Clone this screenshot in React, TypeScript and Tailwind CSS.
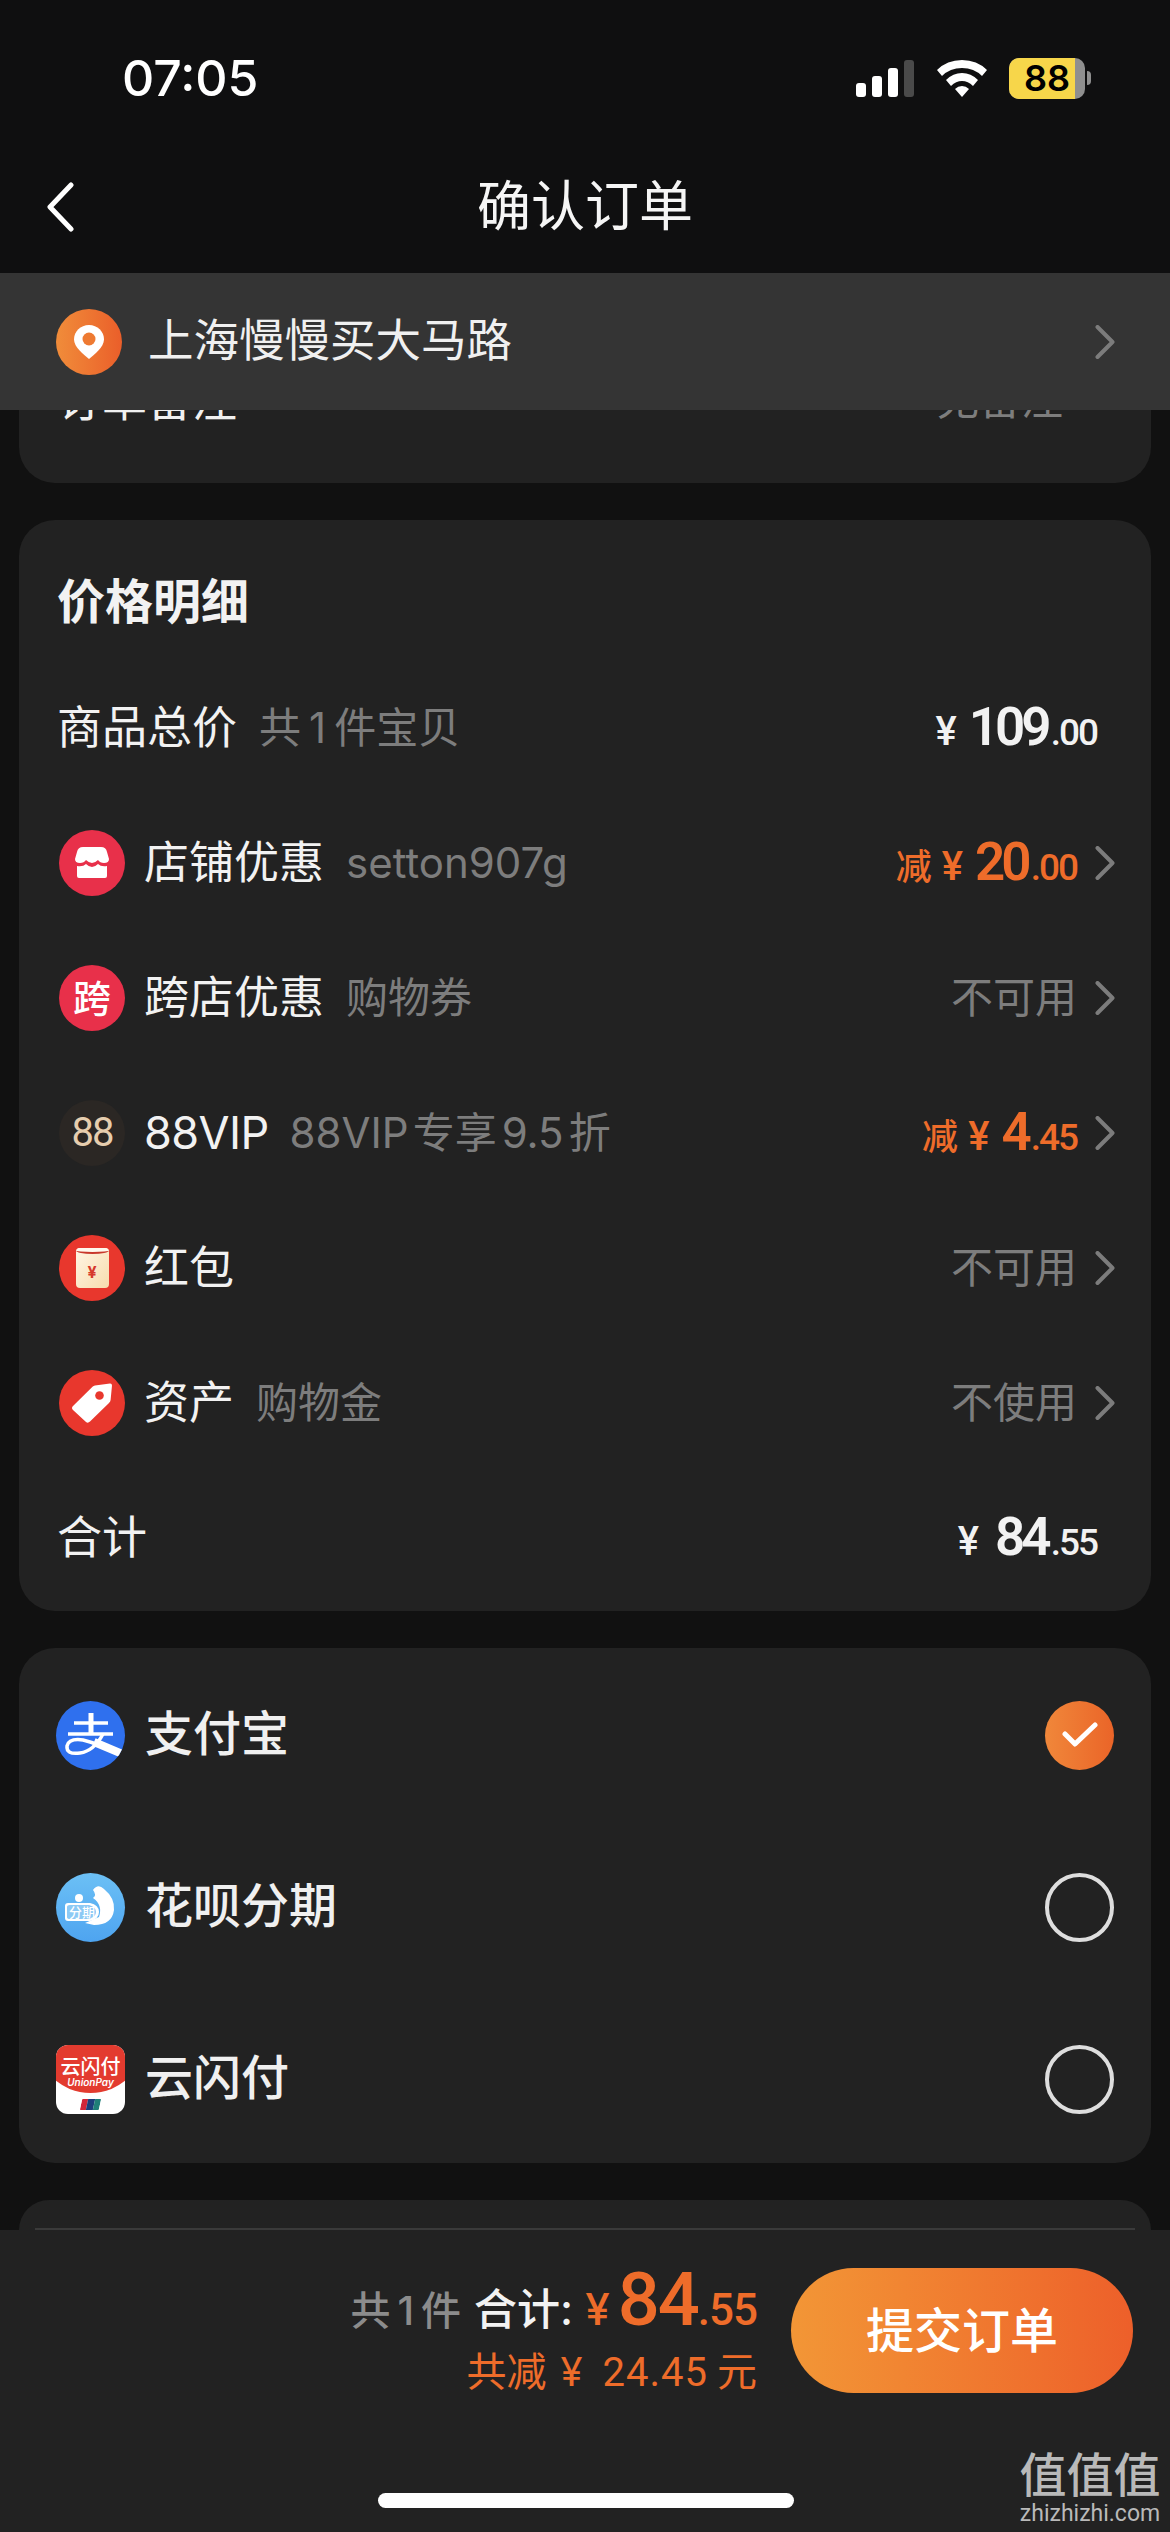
import { ChevronRight } from "lucide-react";

const sans = { fontFamily: '"Inter","Noto Sans CJK SC",sans-serif' };

const Arrow = () => (
  <svg width="20" height="34" viewBox="0 0 20 34" fill="none" className="shrink-0">
    <path d="M2.5 2 L17.5 17 L2.5 32" stroke="#7c7c7c" strokeWidth="4" strokeLinecap="round" strokeLinejoin="round" />
  </svg>
);

const Price = ({ main, cents, color, gap = "mr-[12px]" }: { main: string; cents: string; color: string; gap?: string }) => (
  <span className={`flex items-baseline font-['Roboto','Noto_Sans_CJK_SC',sans-serif] ${color}`}>
    <span className={`text-[40px] font-medium ${gap}`}>¥</span>
    <span className="text-[53px] font-semibold tracking-[-4px]">{main}</span>
    <span className="text-[37px] font-medium tracking-[-2px] ml-[3px]">.{cents}</span>
  </span>
);

const StoreIcon = () => (
  <div className="w-[66px] h-[66px] rounded-full bg-[#e8304a] flex items-center justify-center shrink-0">
    <svg width="34" height="31" viewBox="0 0 34 31">
      <path d="M8 0 H26 Q31 0 32 5 L34 12 Q34 16 29 16 Q25 16 23 13 Q20 16 17 16 Q14 16 11 13 Q9 16 5 16 Q0 16 0 12 L2 5 Q3 0 8 0Z" fill="#fff" />
      <path d="M2 19 Q8 20 11 17 Q14 20 17 20 Q20 20 23 17 Q26 20 32 19 V29 Q32 31 30 31 H4 Q2 31 2 29Z" fill="#fff" />
    </svg>
  </div>
);

const CrossIcon = () => (
  <div className="w-[66px] h-[66px] rounded-full bg-[#e8304a] flex items-center justify-center shrink-0 text-white text-[38px] font-medium leading-none">
    跨
  </div>
);

const VipIcon = () => (
  <div className="w-[66px] h-[66px] rounded-full bg-[#2b2724] flex items-center justify-center shrink-0">
    <span className="text-[40px] leading-none text-[#e6cdae] font-['Roboto',sans-serif] font-normal tracking-[-2px]">88</span>
  </div>
);

const EnvelopeIcon = () => (
  <div className="w-[66px] h-[66px] rounded-full bg-[#e8372d] flex items-center justify-center shrink-0">
    <div className="relative w-[33px] h-[40px] rounded-[4px] bg-gradient-to-br from-[#fff5e4] to-[#f7dcae] flex items-end justify-center overflow-hidden">
      <div className="absolute -top-[1px] left-0 right-0 h-[7px] rounded-b-[50%] bg-[#fff8ee] border-b-2 border-[#c8382c]" />
      <span className="text-[#d6382c] text-[16px] font-bold leading-none mb-[8px]">¥</span>
    </div>
  </div>
);

const TagIcon = () => (
  <div className="w-[66px] h-[66px] rounded-full bg-[#e8372d] flex items-center justify-center shrink-0">
    <svg width="42" height="42" viewBox="0 0 42 42">
      <path d="M39 1.5 L24 3.5 Q22.5 3.7 21.5 4.8 L2 24 Q0 26 2 28 L15 40 Q17 41.5 19 39.5 L38 21 Q39.5 19.5 39.6 18 L41 3.5 Q41 1.4 39 1.5Z" fill="#fff" />
      <circle cx="28.5" cy="13.5" r="4.3" fill="#e8372d" />
    </svg>
  </div>
);

const AlipayIcon = () => (
  <div className="w-[69px] h-[69px] rounded-full bg-[#2f70ee] overflow-hidden shrink-0">
    <svg width="69" height="69" viewBox="0 0 69 69" fill="none" stroke="#fff">
      <path d="M18 22 H52" strokeWidth="3.5" />
      <path d="M35 12 V32" strokeWidth="5" />
      <path d="M12 33 H57" strokeWidth="3.5" />
      <path d="M47 33 Q38 50 24 52 Q10 54 11 45 Q13 37 27 39 Q36 41 44 45" strokeWidth="3.5" />
      <path d="M38 41 L69 54" strokeWidth="8" />
    </svg>
  </div>
);

const HuabeiIcon = () => (
  <div className="relative w-[69px] h-[69px] rounded-full bg-gradient-to-b from-[#6cc0f5] to-[#4ea4f0] overflow-hidden shrink-0">
    <svg width="69" height="69" viewBox="0 0 69 69">
      <path d="M37 17 Q42 10 48 16 Q59 25 58 37 Q56 52 38 52 L29 50 L43 44 Q47 32 37 25 Q41 22 37 17Z" fill="#fff" />
      <circle cx="23" cy="25" r="4" fill="#fff" />
      <path d="M12 30 H34 Q43 32 43 39 Q43 46 34 48 H12Q9 48 9 45V33Q9 30 12 30Z" fill="#fff" />
      <path d="M14 32 H33 Q40 34 40 39 Q40 44 33 46 H14Q11 46 11 44V34Q11 32 14 32Z" fill="#8cc9f5" />
    </svg>
    <span className="absolute left-[13px] top-[31px] text-[13px] leading-[16px] text-white font-medium whitespace-nowrap">分期</span>
  </div>
);

const UnionIcon = () => (
  <div className="relative w-[69px] h-[69px] rounded-[12px] bg-white overflow-hidden shrink-0">
    <div className="absolute -left-[20px] -right-[20px] -top-[60px] h-[108px] rounded-b-[50%] bg-[#e33b2f]" />
    <div className="absolute left-0 right-0 top-[12px] text-center text-white text-[20px] leading-[20px] font-medium">云闪付</div>
    <div className="absolute left-0 right-0 top-[31px] text-center text-white text-[10px] leading-[12px] italic font-semibold">UnionPay</div>
    <div className="absolute left-[25px] top-[54px] w-[19px] h-[11px] flex skew-x-[-12deg] overflow-hidden rounded-[1px]">
      <div className="flex-1 bg-[#d3263a]" />
      <div className="flex-1 bg-[#1c3f7c]" />
      <div className="flex-1 bg-[#1f7f78]" />
    </div>
  </div>
);

const Row = ({ icon, label, sub, subGap = "ml-[22px]", right }: { icon?: React.ReactNode; label: React.ReactNode; sub?: React.ReactNode; subGap?: string; right: React.ReactNode }) => (
  <div className="h-[135px] flex items-center justify-between">
    <div className="flex items-center">
      {icon && <div className="mr-[19px] ml-[2px]">{icon}</div>}
      <span className="text-[45px] text-[#f2f2f2] leading-none">{label}</span>
      {sub && <span className={`${subGap} text-[42px] text-[#7d7d7d] leading-none whitespace-nowrap`}>{sub}</span>}
    </div>
    {right}
  </div>
);

const Value = ({ text }: { text: string }) => (
  <div className="flex items-center gap-[18px]">
    <span className="text-[42px] text-[#7d7d7d] leading-none">{text}</span>
    <Arrow />
  </div>
);

const Discount = ({ main, cents }: { main: string; cents: string }) => (
  <div className="flex items-center gap-[18px]">
    <span className="flex items-baseline text-[#ee6c2a]">
      <span className="text-[36px] font-medium mr-[10px]">减</span>
      <Price main={main} cents={cents} color="text-[#ee6c2a]" />
    </span>
    <Arrow />
  </div>
);

const PayRow = ({ icon, label, checked }: { icon: React.ReactNode; label: string; checked?: boolean }) => (
  <div className="h-[172px] flex items-center justify-between">
    <div className="flex items-center gap-[20px]">
      {icon}
      <span className="text-[48px] font-medium text-[#f0f0f0] leading-none pb-[2px]">{label}</span>
    </div>
    {checked ? (
      <div className="w-[69px] h-[69px] rounded-full bg-gradient-to-r from-[#f0873a] to-[#ea6428] flex items-center justify-center">
        <svg width="36" height="28" viewBox="0 0 36 28" fill="none">
          <path d="M3 13 L13 23 L33 4" stroke="#fff" strokeWidth="5" strokeLinecap="round" strokeLinejoin="round" />
        </svg>
      </div>
    ) : (
      <div className="w-[69px] h-[69px] rounded-full border-[4px] border-[#dedede]" />
    )}
  </div>
);

export default function App() {
  return (
    <div className="relative w-[1170px] h-[2532px] bg-[#111111] overflow-hidden flex flex-col" style={sans}>
      {/* status bar */}
      <div className="h-[156px] bg-[#0f0f10] flex items-center justify-between pl-[122px] pr-[79px] shrink-0">
        <span className="text-[50px] font-medium text-white font-['Inter',sans-serif]">07:05</span>
        <div className="flex items-center">
          <div className="flex items-end gap-[6px] h-[37px] mr-[23px]">
            <div className="w-[10px] h-[14px] rounded-[3px] bg-white" />
            <div className="w-[10px] h-[21px] rounded-[3px] bg-white" />
            <div className="w-[10px] h-[29px] rounded-[3px] bg-white" />
            <div className="w-[10px] h-[37px] rounded-[3px] bg-[#4a4a4a]" />
          </div>
          <svg width="50" height="37" viewBox="0 0 50 37" fill="#fff" className="mr-[22px]">
            <path d="M25 0 Q40 0 50 10 L45 16 Q37 8 25 8 Q13 8 5 16 L0 10 Q10 0 25 0Z" />
            <path d="M25 13 Q34 13 41 20 L36 26 Q31 21 25 21 Q19 21 14 26 L9 20 Q16 13 25 13Z" />
            <path d="M25 26 Q29 26 32 29 L25 37 L18 29 Q21 26 25 26Z" />
          </svg>
          <div className="w-[76px] h-[41px] rounded-[10px] bg-[#8f8f8f] overflow-hidden">
            <div className="w-[66px] h-full bg-[#f7d64a] flex items-center justify-end pr-[5px]">
              <span className="text-[36px] font-semibold text-black leading-none">88</span>
            </div>
          </div>
          <div className="w-[4px] h-[14px] rounded-r-full bg-[#8f8f8f] ml-[2px]" />
        </div>
      </div>

      {/* nav */}
      <div className="relative h-[100px] bg-[#0f0f10] flex items-center justify-center shrink-0">
        <svg width="30" height="50" viewBox="0 0 30 50" fill="none" className="absolute left-[45px] top-[26px]">
          <path d="M26 3 L5 25 L26 47" stroke="#fff" strokeWidth="5" strokeLinecap="round" strokeLinejoin="round" />
        </svg>
        <span className="text-[54px] text-[#f5f5f5] leading-none pt-[2px]">确认订单</span>
      </div>
      <div className="h-[17px] bg-[#0f0f10] shrink-0" />

      {/* address */}
      <div className="h-[137px] bg-[#343434] flex items-center justify-between pl-[56px] pr-[55px] shrink-0">
        <div className="flex items-center gap-[26px]">
          <div className="w-[66px] h-[66px] rounded-full bg-gradient-to-r from-[#f08c3a] to-[#ea5e2a] flex items-center justify-center">
            <svg width="30" height="34" viewBox="0 0 30 34">
              <path d="M15 0 C23.5 0 30 6.5 30 14.5 C30 22 20 30 15 34 C10 30 0 22 0 14.5 C0 6.5 6.5 0 15 0Z" fill="#fff" />
              <circle cx="15" cy="14" r="6.5" fill="#ee7a32" />
            </svg>
          </div>
          <span className="text-[45.5px] text-[#f0f0f0] leading-none pb-[2px]">上海慢慢买大马路</span>
        </div>
        <Arrow />
      </div>

      {/* scroll area */}
      <div className="flex-1 overflow-hidden">
        <div className="mx-[19px] h-[73px] bg-[#222222] rounded-b-[36px] overflow-hidden">
          <div className="flex justify-between items-center pl-[38px] pr-[40px] h-[60px] -mt-[40px]">
            <span className="text-[45px] text-[#f0f0f0] leading-none">订单备注</span>
            <div className="flex items-center gap-[14px]">
              <span className="text-[42px] text-[#7d7d7d] leading-none">无备注</span>
              <ChevronRight className="text-[#7d7d7d]" size={34} />
            </div>
          </div>
        </div>

        <div className="mx-[19px] mt-[37px] h-[1091px] bg-[#222222] rounded-[36px] pl-[38px] pr-[36px]">
          <div className="h-[147px] flex items-center pt-[17px]">
            <span className="text-[48px] font-bold text-[#f2f2f2] leading-none">价格明细</span>
          </div>
          <div className="-mt-[7px]">
            <Row
              label="商品总价"
              sub={<>共<span className="mx-[8px]">1</span>件宝贝</>}
              right={<div className="pr-[18px]"><Price main="109" cents="00" color="text-[#f2f2f2]" /></div>}
            />
            <Row icon={<StoreIcon />} label="店铺优惠" sub="setton907g" right={<Discount main="20" cents="00" />} />
            <Row icon={<CrossIcon />} label="跨店优惠" sub="购物券" right={<Value text="不可用" />} />
            <Row
              icon={<VipIcon />}
              label={<span className="tracking-[-0.6px]">88VIP</span>}
              subGap="ml-[21px]"
              sub={<>88VIP<span className="ml-[4px]">专享</span><span className="mx-[5px]">9.5</span>折</>}
              right={<Discount main="4" cents="45" />}
            />
            <Row icon={<EnvelopeIcon />} label="红包" right={<Value text="不可用" />} />
            <Row icon={<TagIcon />} label="资产" sub="购物金" right={<Value text="不使用" />} />
            <Row label="合计" right={<div className="pr-[18px]"><Price main="84" cents="55" color="text-[#f2f2f2]" gap="mr-[16px]" /></div>} />
          </div>
        </div>

        <div className="mx-[19px] mt-[37px] h-[515px] bg-[#222222] rounded-[36px] px-[37px] pt-[1px]">
          <PayRow icon={<AlipayIcon />} label="支付宝" checked />
          <PayRow icon={<HuabeiIcon />} label="花呗分期" />
          <PayRow icon={<UnionIcon />} label="云闪付" />
        </div>

        <div className="mx-[19px] mt-[37px] h-[30px] bg-[#222222] rounded-t-[36px] px-[16px] flex items-end">
          <div className="w-full h-[2px] bg-[#3a3a3a]" />
        </div>
      </div>

      {/* bottom bar */}
      <div className="h-[302px] bg-[#222222] pr-[37px] pt-[33px] shrink-0 flex items-start justify-end">
        <div className="flex flex-col items-end">
          <div className="flex items-baseline h-[72px] whitespace-nowrap">
            <span className="text-[40px] font-medium text-[#8c8c8c] leading-none">
              共<span className="mx-[7px]">1</span>件
            </span>
            <span className="text-[43px] font-medium text-[#f2f2f2] ml-[13px] leading-none">合计:</span>
            <span className="text-[44px] font-medium text-[#ee6c2a] ml-[12px] leading-none">¥</span>
            <span className="text-[74px] font-medium text-[#ee6c2a] ml-[8px] tracking-[-2px] font-['Roboto',sans-serif] leading-none">84</span>
            <span className="text-[44px] font-medium text-[#ee6c2a] tracking-[-1px] font-['Roboto',sans-serif] leading-none">.55</span>
          </div>
          <div className="flex items-baseline text-[40px] text-[#ee6c2a] leading-none mt-[17px] whitespace-nowrap">
            <span>共减</span>
            <span className="ml-[14px]">¥</span>
            <span className="ml-[20px] tracking-[1px] font-['Roboto',sans-serif]">24.45</span>
            <span className="ml-[9px]">元</span>
          </div>
        </div>
        <button className="ml-[34px] mt-[5px] w-[342px] h-[125px] rounded-full bg-gradient-to-r from-[#f29636] to-[#ed5f2a] text-white text-[48px] font-medium leading-none">
          提交订单
        </button>
      </div>

      {/* home indicator */}
      <div className="absolute left-[378px] top-[2493px] w-[416px] h-[15px] rounded-full bg-white" />

      {/* watermark */}
      <div className="absolute left-[1018px] top-[2448px] w-[144px] flex flex-col items-center text-[#b9b9b9]">
        <span className="text-[47px] font-medium leading-[54px] whitespace-nowrap">值值值</span>
        <span className="text-[23px] leading-[24px] whitespace-nowrap font-['Roboto',sans-serif]">zhizhizhi.com</span>
      </div>
    </div>
  );
}
